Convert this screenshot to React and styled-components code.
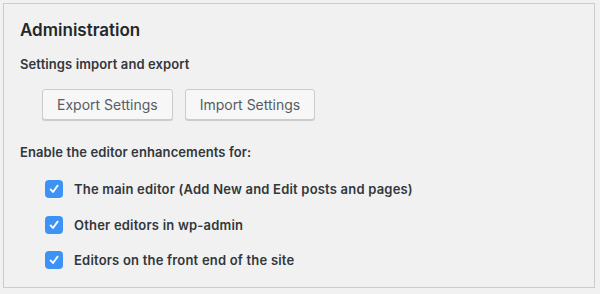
import React from 'react';
import styled, { createGlobalStyle } from 'styled-components';

const GlobalStyle = createGlobalStyle`
  html, body {
    margin: 0;
    padding: 0;
    background: #f1f1f1;
  }
  body {
    font-family: Inter, "Open Sans", "Liberation Sans", sans-serif;
    color: #32373c;
  }
`;

const Page = styled.div`
  padding: 3px 5px 6px 3px;
  width: 600px;
  height: 294px;
  box-sizing: border-box;
`;

const Panel = styled.section`
  border: 1px solid #cccccc;
  background: #f1f1f1;
  height: 100%;
  box-sizing: border-box;
  padding: 14px 16px 0 16px;
`;

const Title = styled.h2`
  margin: 0;
  font-size: 17px;
  font-weight: 600;
  color: #23282d;
  line-height: 24px;
`;

const SubHeading = styled.h3`
  margin: ${p => p.$top}px 0 0 0;
  font-size: 13px;
  font-weight: 600;
  color: #32373c;
  line-height: 18px;
  letter-spacing: 0.1px;
`;

const ButtonRow = styled.div`
  display: flex;
  gap: 12px;
  margin: 16px 0 0 22px;
`;

const Button = styled.button`
  height: 31px;
  padding: 0 14px;
  font-family: inherit;
  font-size: 14px;
  color: #555d66;
  background: #f7f7f7;
  border: 1px solid #cccccc;
  border-radius: 3px;
  box-shadow: 0 1px 0 #cccccc;
  cursor: pointer;
`;

const OptionList = styled.div`
  display: flex;
  flex-direction: column;
  gap: 17.5px;
  margin: 19px 0 0 25px;
`;

const Option = styled.label`
  display: flex;
  align-items: center;
  gap: 11px;
  font-size: 13px;
  font-weight: 600;
  color: #32373c;
  line-height: 18px;
  letter-spacing: 0.2px;
`;

const Box = styled.span`
  width: 18px;
  height: 18px;
  border-radius: 4px;
  background: #3d93f5;
  display: flex;
  align-items: center;
  justify-content: center;
  flex: none;
`;

const Check = () => (
  <Box>
    <svg width="12" height="12" viewBox="0 0 12 12">
      <path d="M2.6 6.4 L5 9 L9.6 2.6" fill="none" stroke="#fff" strokeWidth="1.8" strokeLinecap="round" strokeLinejoin="round" />
    </svg>
  </Box>
);

const options = [
  'The main editor (Add New and Edit posts and pages)',
  'Other editors in wp-admin',
  'Editors on the front end of the site',
];

export default function App() {
  return (
    <>
      <GlobalStyle />
      <Page>
        <Panel>
          <Title>Administration</Title>
          <SubHeading $top={13}>Settings import and export</SubHeading>
          <ButtonRow>
            <Button>Export Settings</Button>
            <Button>Import Settings</Button>
          </ButtonRow>
          <SubHeading $top={23}>Enable the editor enhancements for:</SubHeading>
          <OptionList>
            {options.map(o => (
              <Option key={o}>
                <Check />
                {o}
              </Option>
            ))}
          </OptionList>
        </Panel>
      </Page>
    </>
  );
}
